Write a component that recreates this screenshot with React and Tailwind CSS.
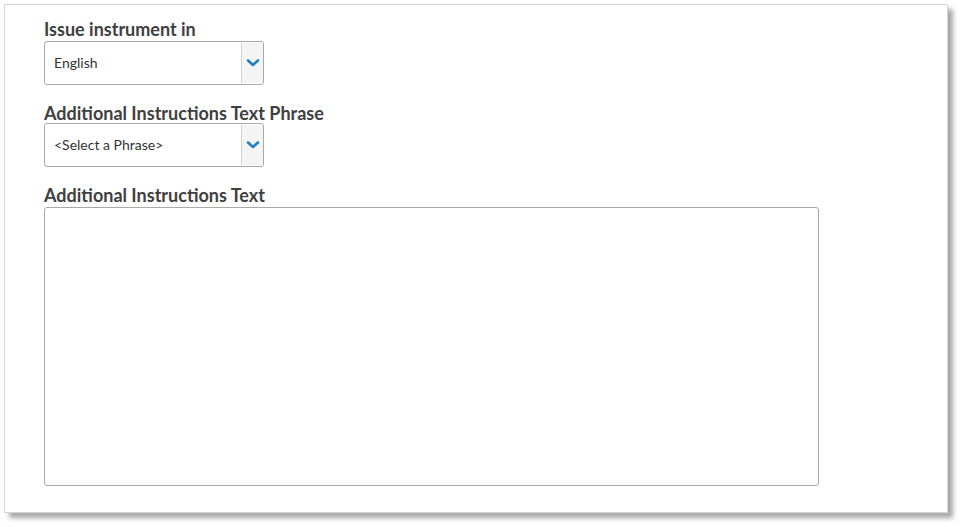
export default function App() {
  const Chevron = () => (
    <svg width="14" height="10" viewBox="0 0 14 10" fill="none">
      <path d="M2 2.5 L7 7 L12 2.5" stroke="#1f7fc0" strokeWidth="2.6" strokeLinecap="round" strokeLinejoin="round" />
    </svg>
  );
  const Select = ({ text }) => (
    <div className="flex h-[44px] w-[220px] rounded-[3px] border border-[#a9a9a9] bg-white">
      <div className="flex flex-1 items-center pb-[2px] pl-[9px] text-[14px] text-[#333]">{text}</div>
      <div className="my-[1px] flex w-[22px] items-center justify-center border-l border-[#d0d0d0] bg-[#f4f4f4]">
        <Chevron />
      </div>
    </div>
  );
  return (
    <div className="h-[527px] w-[961px] bg-white pl-[4px] pt-[4px]" style={{ fontFamily: "Lato, 'Open Sans', sans-serif" }}>
      <div className="flex h-[509px] w-[944px] flex-col border border-[#d6d6d6] bg-white pl-[39px] pt-[13px] shadow-[5px_5px_5px_rgba(0,0,0,0.35)]">
        <div className="text-[18px] font-bold leading-[23px] text-[#404040]">Issue instrument in</div>
        <div className="mt-0"><Select text="English" /></div>
        <div className="mt-[17px] text-[18px] font-bold leading-[23px] text-[#404040]">Additional Instructions Text Phrase</div>
        <div className="mt-[-2px]"><Select text="<Select a Phrase>" /></div>
        <div className="mt-[17px] text-[18px] font-bold leading-[23px] text-[#404040]">Additional Instructions Text</div>
        <div className="mt-0 h-[279px] w-[775px] rounded-[3px] border border-[#a9a9a9] bg-white"></div>
      </div>
    </div>
  );
}
